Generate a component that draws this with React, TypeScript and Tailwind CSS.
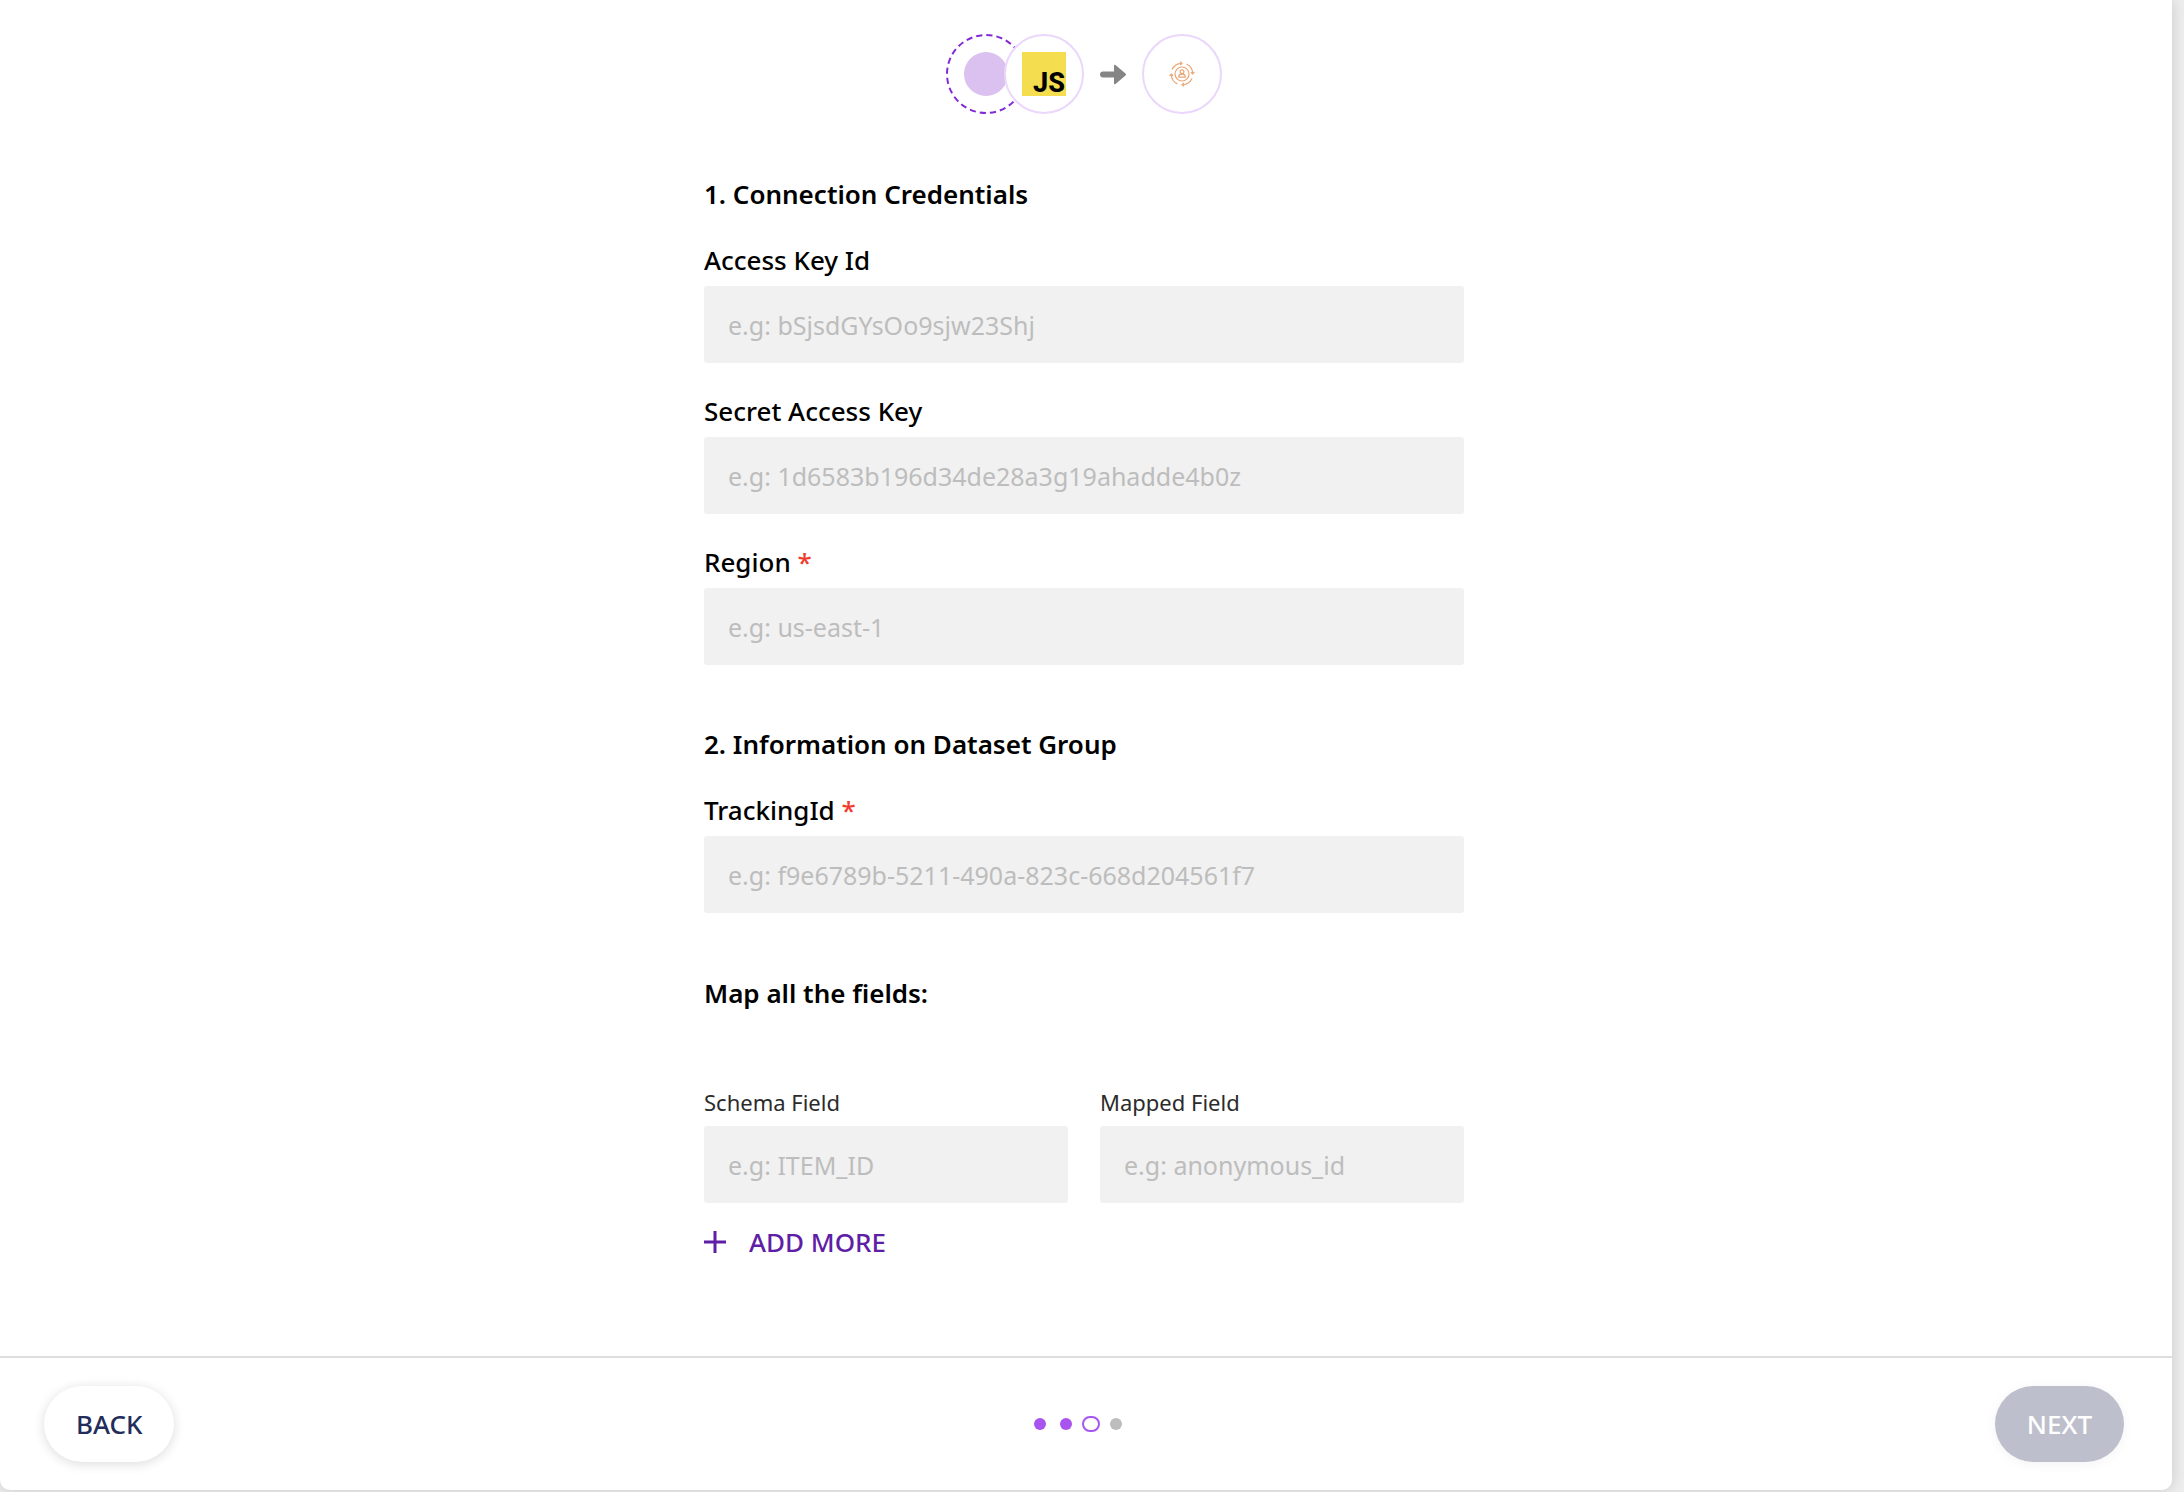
import React from "react";

const fields = [
  { id: "access-key", label: "Access Key Id", placeholder: "e.g: bSjsdGYsOo9sjw23Shj", required: false },
  { id: "secret-key", label: "Secret Access Key", placeholder: "e.g: 1d6583b196d34de28a3g19ahadde4b0z", required: false },
  { id: "region", label: "Region", placeholder: "e.g: us-east-1", required: true },
];

const inputClass =
  "h-[77px] w-full rounded-[3px] bg-[#f1f1f1] px-6 text-[25px] leading-9 text-black outline-none placeholder:text-[#bdbdbd]";

function Field({ id, label, placeholder, required }: { id: string; label: string; placeholder: string; required: boolean }) {
  return (
    <div className="mt-[30px] flex flex-col gap-2">
      <label htmlFor={id} className="text-[26px] leading-9 font-medium text-black">
        {label}
        {required && <span className="text-[#f03a2b]"> *</span>}
      </label>
      <input id={id} type="text" placeholder={placeholder} required={required} className={inputClass} />
    </div>
  );
}

function MappingField({ id, label, placeholder }: { id: string; label: string; placeholder: string }) {
  return (
    <div className="flex min-w-0 flex-col gap-2">
      <label htmlFor={id} className="text-[22px] leading-8 text-[#2b2b2b]">
        {label}
      </label>
      <input id={id} type="text" placeholder={placeholder} className={inputClass} />
    </div>
  );
}

function SourceBadge() {
  return (
    <svg className="size-20" viewBox="0 0 80 80" aria-hidden="true">
      <circle cx="40" cy="40" r="39" fill="#fff" stroke="#8429d6" strokeWidth="2" strokeDasharray="6.2 4.01" />
      <circle cx="40" cy="40" r="22" fill="#dac1f0" />
    </svg>
  );
}

function JsBadge() {
  return (
    <div className="-ml-[22px] flex size-20 items-center justify-center rounded-full border-2 border-[#ead7fb] bg-white">
      <div
        role="img"
        aria-label="JavaScript"
        className="flex size-11 items-end justify-end bg-[#f4dd4e] pr-px font-['Roboto',sans-serif] text-[27px] leading-[26px] font-extrabold text-black"
      >
        JS
      </div>
    </div>
  );
}

function ArrowRight() {
  return (
    <svg className="mx-4 h-[22px] w-[26px]" viewBox="0 0 26 22" fill="#858585" aria-hidden="true">
      <path d="M3 8.500h11V2.600c0-.9.9-1.200 1.500-.6l10 8.600c.6.5.6 1.300 0 1.800l-10 8.600c-.6.6-1.500.3-1.500-.6V14.500H3a3 3 0 0 1 0-6z" />
    </svg>
  );
}

function PersonalizeBadge() {
  return (
    <div className="flex size-20 items-center justify-center rounded-full border-2 border-[#ead7fb] bg-white">
      <svg className="size-[26px]" viewBox="0 0 26 26" fill="none" stroke="#e9a877" strokeWidth="1.2" aria-hidden="true">
        <circle cx="13" cy="13" r="7" />
        <circle cx="13" cy="10.800" r="1.900" />
        <path d="M9.800 16.200v-.8c0-1.300.8-2.100 2-2.100h2.400c1.200 0 2 .8 2 2.100v.8z" />
        {[0, 90, 180, 270].map((angle) => (
          <g key={angle} transform={`rotate(${angle} 13 13)`}>
            <path d="M3 8.500A11 11 0 0 1 12.500 2.300" />
            <path d="M11 .6L13 2.300L11.200 4.200" />
          </g>
        ))}
      </svg>
    </div>
  );
}

function StepDots() {
  return (
    <div className="mr-[14px] flex items-center gap-[10px]" role="img" aria-label="Step 3 of 4">
      <span className="mr-1 size-3 rounded-full bg-[#a855f0]" />
      <span className="size-3 rounded-full bg-[#a855f0]" />
      <span className="h-4 w-[18px] rounded-full border-2 border-[#a855f0]" />
      <span className="size-3 rounded-full bg-[#bdbdbd]" />
    </div>
  );
}

export default function App() {
  return (
    <div className="flex min-h-screen flex-col bg-[#eeeeee] pr-3 pb-[2px] font-['Noto_Sans',sans-serif]">
      <div className="flex flex-1 flex-col rounded-b-[10px] bg-white shadow-[0_0_16px_rgba(0,0,0,0.16)]">
        <main className="flex flex-1 flex-col items-center pt-[34px] pr-1">
          <div className="flex items-center">
            <SourceBadge />
            <JsBadge />
            <ArrowRight />
            <PersonalizeBadge />
          </div>

          <form className="mt-[62px] w-full max-w-[760px]">
            <h2 className="text-[26px] leading-9 font-semibold text-black">1. Connection Credentials</h2>
            {fields.map((field) => (
              <Field key={field.id} {...field} />
            ))}

            <h2 className="mt-[61px] text-[26px] leading-9 font-semibold text-black">2. Information on Dataset Group</h2>
            <Field id="tracking-id" label="TrackingId" placeholder="e.g: f9e6789b-5211-490a-823c-668d204561f7" required />

            <h2 className="mt-[62px] text-[26px] leading-9 font-semibold text-black">Map all the fields:</h2>
            <div className="mt-[75px] grid grid-cols-2 gap-8">
              <MappingField id="schema-field" label="Schema Field" placeholder="e.g: ITEM_ID" />
              <MappingField id="mapped-field" label="Mapped Field" placeholder="e.g: anonymous_id" />
            </div>

            <button type="button" className="mt-[21px] flex items-center gap-[23px] text-[26px] leading-9 font-medium text-[#5f1ea6]">
              <svg className="size-[22px]" viewBox="0 0 22 22" stroke="currentColor" strokeWidth="3" aria-hidden="true">
                <path d="M11 0v22M0 11h22" />
              </svg>
              ADD MORE
            </button>
          </form>
        </main>

        <footer className="flex items-center justify-between border-t-2 border-[#dedede] py-7 pr-12 pl-11">
          <button
            type="button"
            className="h-[76px] rounded-full bg-white px-8 text-[26px] leading-9 font-medium text-[#232d5b] shadow-[0_2px_12px_rgba(0,0,0,0.14)]"
          >
            BACK
          </button>
          <StepDots />
          <button
            type="button"
            disabled
            className="h-[76px] rounded-full bg-[#bebfcc] px-8 text-[26px] leading-9 font-medium text-white shadow-[0_2px_12px_rgba(0,0,0,0.05)]"
          >
            NEXT
          </button>
        </footer>
      </div>
    </div>
  );
}
